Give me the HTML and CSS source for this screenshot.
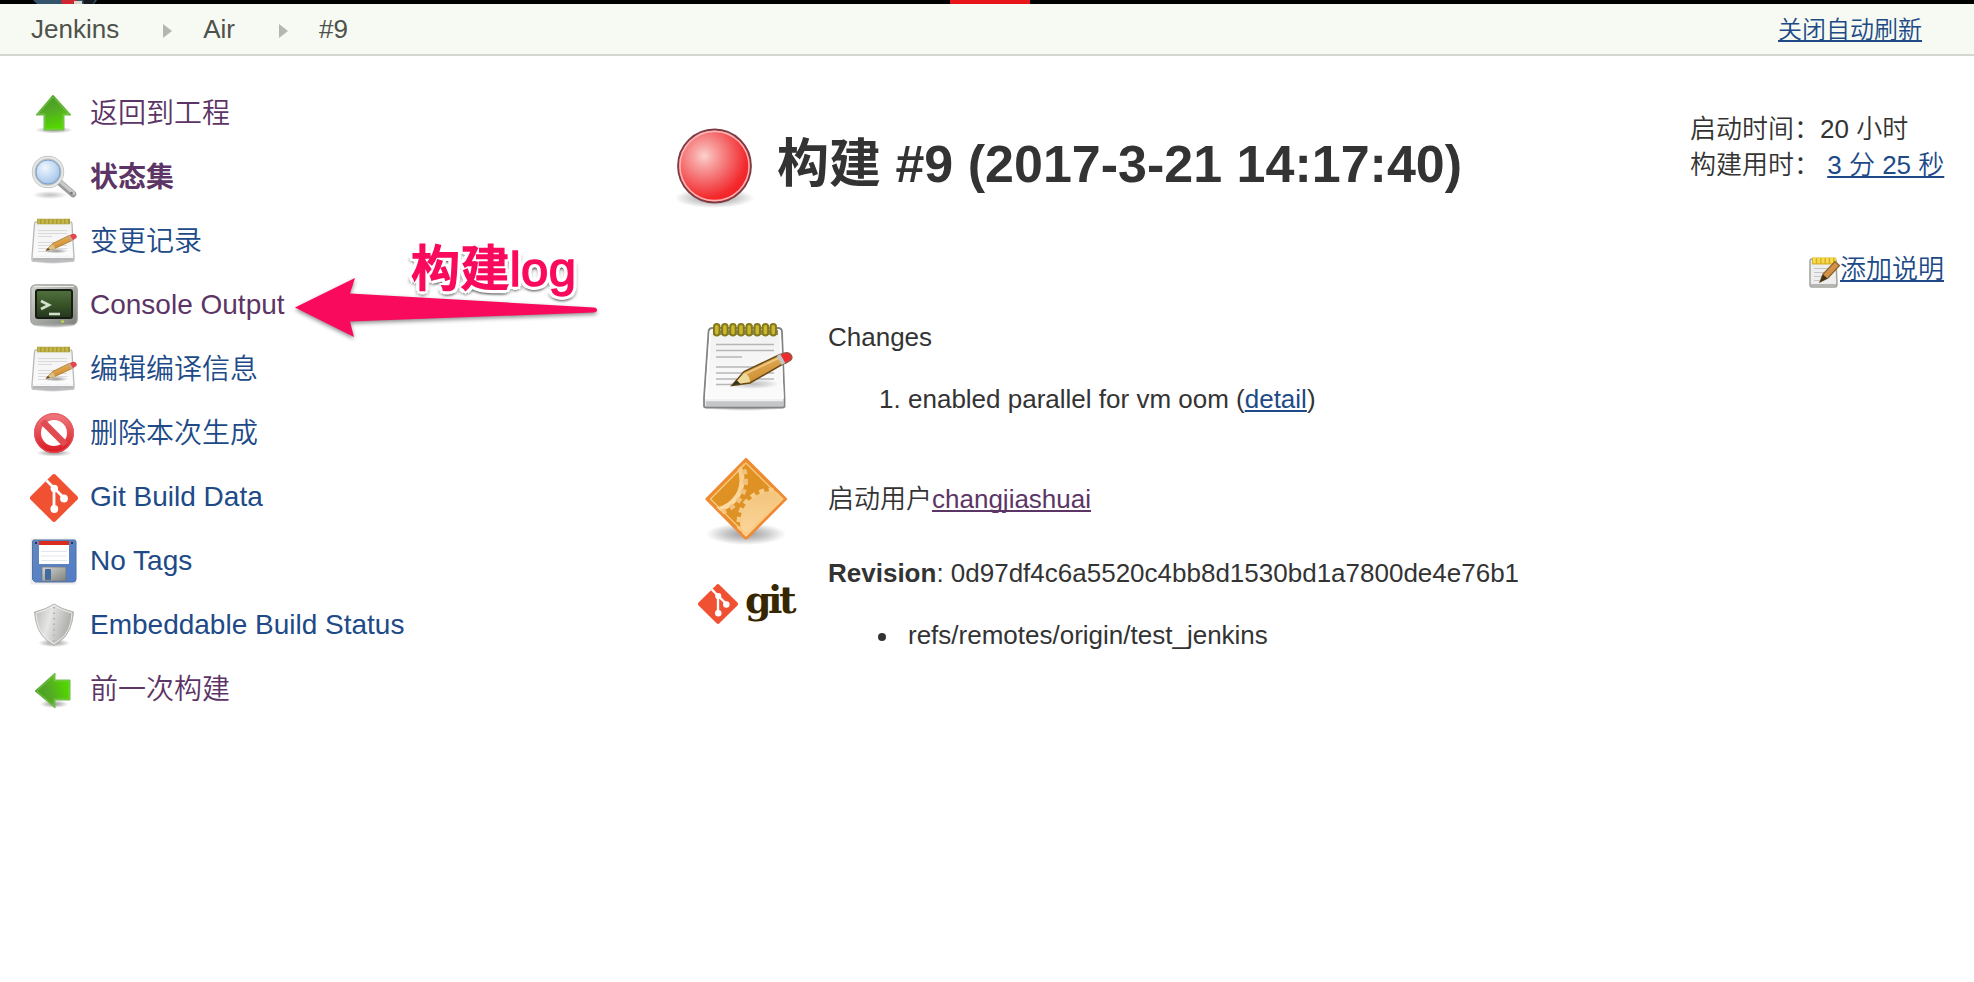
FILE: index.html
```html
<!DOCTYPE html>
<html lang="zh-CN">
<head>
    <meta charset="UTF-8">
    <title>Air #9 [Jenkins]</title>
    <link rel="stylesheet" href="styles.css">
</head>
<body>
    <svg class="defs" width="0" height="0">
        <defs>
            <linearGradient id="green" x1="0" y1="0" x2="0.3" y2="1">
                <stop offset="0" stop-color="#3f9a1c"/>
                <stop offset="0.5" stop-color="#54a826"/>
                <stop offset="1" stop-color="#52d600"/>
            </linearGradient>
            <linearGradient id="paper" x1="0" y1="0" x2="0" y2="1">
                <stop offset="0" stop-color="#f1f1f1"/>
                <stop offset="0.85" stop-color="#fbfbfb"/>
                <stop offset="1" stop-color="#dcdcdc"/>
            </linearGradient>
            <linearGradient id="wood" x1="0" y1="0" x2="0.5" y2="1">
                <stop offset="0" stop-color="#efc377"/>
                <stop offset="1" stop-color="#c98524"/>
            </linearGradient>
            <linearGradient id="metal" x1="0" y1="0" x2="1" y2="1">
                <stop offset="0" stop-color="#d4d6d2"/>
                <stop offset="1" stop-color="#7f817d"/>
            </linearGradient>
            <linearGradient id="screen" x1="0" y1="0" x2="0" y2="1">
                <stop offset="0" stop-color="#51703f"/>
                <stop offset="0.5" stop-color="#395528"/>
                <stop offset="1" stop-color="#23361e"/>
            </linearGradient>
            <linearGradient id="stop" x1="0" y1="0" x2="0" y2="1">
                <stop offset="0" stop-color="#ee7378"/>
                <stop offset="1" stop-color="#dc2029"/>
            </linearGradient>
            <linearGradient id="disk" x1="0" y1="0" x2="1" y2="1">
                <stop offset="0" stop-color="#6288bd"/>
                <stop offset="1" stop-color="#527dc8"/>
            </linearGradient>
            <linearGradient id="shield" x1="0" y1="0" x2="1" y2="0.3">
                <stop offset="0" stop-color="#b5b7b3"/>
                <stop offset="0.45" stop-color="#e6e7e4"/>
                <stop offset="0.6" stop-color="#d4d5d2"/>
                <stop offset="1" stop-color="#a8aaa6"/>
            </linearGradient>
            <linearGradient id="amber" x1="0" y1="0" x2="0.3" y2="1">
                <stop offset="0" stop-color="#e1921f"/>
                <stop offset="1" stop-color="#dd9128"/>
            </linearGradient>
            <linearGradient id="gear" x1="0" y1="0" x2="0" y2="1">
                <stop offset="0" stop-color="#f3c57c"/>
                <stop offset="1" stop-color="#ffdda8"/>
            </linearGradient>
            <radialGradient id="lens" cx="0.4" cy="0.35" r="0.7">
                <stop offset="0" stop-color="#f0f6fd"/>
                <stop offset="1" stop-color="#98bde6"/>
            </radialGradient>
            <radialGradient id="red" cx="0.36" cy="0.36" r="0.68">
                <stop offset="0" stop-color="#fbd2ce"/>
                <stop offset="0.2" stop-color="#f8a5a3"/>
                <stop offset="0.6" stop-color="#f4585b"/>
                <stop offset="0.85" stop-color="#f32a2e"/>
                <stop offset="1" stop-color="#f42125"/>
            </radialGradient>
            <radialGradient id="shade">
                <stop offset="0" stop-color="#000" stop-opacity="0.4"/>
                <stop offset="0.55" stop-color="#000" stop-opacity="0.2"/>
                <stop offset="1" stop-color="#000" stop-opacity="0"/>
            </radialGradient>
            <clipPath id="diamond"><path d="M48 8L86 46 48 84 10 46z"/></clipPath>
            <symbol id="notepad" viewBox="0 0 48 48">
                <ellipse cx="23" cy="43" rx="22" ry="3" fill="url(#shade)"/>
                <path d="M6 4h34q2 0 2 2l2 33v3q0 1-1 1H3q-1 0-1-1V39L4.500 6q0-2 1.500-2z" fill="url(#paper)" stroke="#b8b8b8" stroke-width="1.300"/>
                <path d="M3 41h40" stroke="#b4b6b9" stroke-width="2.500"/>
                <path d="M3 39.500h40" stroke="#fff" stroke-width="0.800"/>
                <path d="M8 12.500h29M8 15.500h29M8 18.500h14M8 24.500h29M8 27.500h29M8 30.500h29M8 33.500h12" stroke="#d2d2d2" stroke-width="0.800"/>
                <path d="M7 3.500h33" stroke="#a99c3e" stroke-width="5.500"/>
                <path d="M7.500 3.500h32" stroke="#c6b646" stroke-width="4.500" stroke-dasharray="2.500 1.500"/>
                <ellipse cx="26" cy="33" rx="12" ry="2.500" fill="url(#shade)"/>
                <path d="M16 32.500L22.500 25.500 39 17.500l3 5-18 8.500z" fill="url(#wood)" stroke="#ad7731" stroke-width="0.800"/>
                <path d="M16 32.500L22 26.500q3 1 3 4.500z" fill="#dcc28a"/>
                <path d="M16 32.500l2-2.500 2 1.500z" fill="#464020"/>
                <path d="M39 17.500l3-1.500q3.500-1 4.500 1.500 1 2-1.500 3.500l-3 1.500z" fill="#e2474d"/>
                <path d="M39 17.500l3 5" stroke="#c7a9a0" stroke-width="1.800"/>
            </symbol>
            <symbol id="git" viewBox="0 0 48 48">
                <path d="M22.300.8q1.700-1.600 3.400 0L47.300 22.300q1.500 1.700 0 3.400L25.700 47.200q-1.700 1.600-3.400 0L.7 25.700q-1.500-1.700 0-3.400z" fill="#f05133"/>
                <path d="M16.500 6.500L24 14v20.500M25 15l9.500 9.500" fill="none" stroke="#fff" stroke-width="2.800"/>
                <circle cx="24.300" cy="14.500" r="3.700" fill="#fff"/>
                <circle cx="34" cy="24.500" r="3.900" fill="#fff"/>
                <circle cx="24.300" cy="35" r="3.900" fill="#fff"/>
            </symbol>
            <symbol id="arrow" viewBox="0 0 48 48">
                <path d="M23 5L41 25h-7v15H14V25H6z" fill="url(#green)" stroke="#71bb4c" stroke-linejoin="round"/>
                <path d="M23 7L38.500 24H33v15H15V24H8z" fill="none" stroke="#8ccf66" stroke-opacity="0.6"/>
            </symbol>
        </defs>
    </svg>

    <header class="header">
        <svg class="logo" viewBox="0 0 64 4">
            <path d="M0 0h64l-3 4H4z" fill="#34536d"/>
            <path d="M28 0h16l-4 4H29z" fill="#cf2630"/>
            <path d="M41 1h8v3h-8z" fill="#ddd3cb"/>
            <path d="M50 0h12l-2 4h-9z" fill="#161a20"/>
        </svg>
        <div class="search"></div>
    </header>

    <nav class="breadcrumbs">
        <ul>
            <li>Jenkins</li>
            <li>Air</li>
            <li>#9</li>
        </ul>
        <a href="#" class="refresh">关闭自动刷新</a>
    </nav>

    <div class="page">
        <aside class="tasks">
            <a href="#" class="task visited zh">
                <svg class="icon" viewBox="0 0 48 48">
                    <ellipse cx="24" cy="40" rx="19" ry="3.500" fill="url(#shade)"/>
                    <use href="#arrow"/>
                </svg>
                <span>返回到工程</span>
            </a>
            <a href="#" class="task visited current zh">
                <svg class="icon" viewBox="0 0 48 48">
                    <ellipse cx="20" cy="41" rx="18" ry="4" fill="url(#shade)" opacity="0.6"/>
                    <path d="M28 27l15 13" stroke="#9a9a9a" stroke-width="6.500" stroke-linecap="round"/>
                    <path d="M28.500 26l15 13" stroke="#c9c9c9" stroke-width="3.500" stroke-linecap="round"/>
                    <circle cx="41.500" cy="39" r="1.300" fill="#777"/>
                    <circle cx="18" cy="18" r="14.300" fill="url(#lens)" stroke="#b9bcb9" stroke-width="3.800"/>
                    <circle cx="18" cy="18" r="14.500" fill="none" stroke="#e8eae8" stroke-width="2"/>
                    <circle cx="18" cy="18" r="12" fill="none" stroke="#799fcb" stroke-width="1"/>
                </svg>
                <span>状态集</span>
            </a>
            <a href="#" class="task zh">
                <svg class="icon"><use href="#notepad"/></svg>
                <span>变更记录</span>
            </a>
            <a href="#" class="task visited">
                <svg class="icon" viewBox="0 0 48 48">
                    <ellipse cx="24" cy="43" rx="22" ry="3" fill="url(#shade)"/>
                    <rect x="0.800" y="2.800" width="46.400" height="40" rx="5" fill="url(#metal)" stroke="#a3a5a1" stroke-width="1.300"/>
                    <path d="M4 4.500h40" stroke="#ececea" stroke-width="1"/>
                    <rect x="6" y="8" width="36" height="28" rx="2" fill="url(#screen)" stroke="#171c12" stroke-width="2"/>
                    <path d="M11 19l8 4-8 4" fill="none" stroke="#d5dfce" stroke-width="2.600"/>
                    <path d="M19 32h11" stroke="#d5dfce" stroke-width="2.600"/>
                    <circle cx="32.500" cy="39.500" r="1.600" fill="#b8d34c"/>
                </svg>
                <span>Console Output</span>
            </a>
            <a href="#" class="task zh">
                <svg class="icon"><use href="#notepad"/></svg>
                <span>编辑编译信息</span>
            </a>
            <a href="#" class="task zh">
                <svg class="icon" viewBox="0 0 48 48">
                    <ellipse cx="24" cy="43" rx="18" ry="3.500" fill="url(#shade)"/>
                    <circle cx="24" cy="23" r="16.500" fill="#fff" stroke="url(#stop)" stroke-width="7"/>
                    <path d="M12.500 11.500l23 23" stroke="#e04a51" stroke-width="6.500"/>
                    <circle cx="24" cy="23" r="19.400" fill="none" stroke="#df5a60" stroke-width="0.900"/>
                </svg>
                <span>删除本次生成</span>
            </a>
            <a href="#" class="task">
                <svg class="icon"><use href="#git"/></svg>
                <span>Git Build Data</span>
            </a>
            <a href="#" class="task">
                <svg class="icon" viewBox="0 0 48 48">
                    <rect x="0.500" y="0.500" width="46" height="46" fill="#ececec"/>
                    <path d="M4 2h40q2 0 2 2v37q0 3-3 3H6q-1 0-2-1l-1.500-1.500V4Q2.500 2 4 2z" fill="url(#disk)" stroke="#5273a6"/>
                    <path d="M9 4h30v22H9z" fill="#fff"/>
                    <path d="M9 3h30v4H9z" fill="#da2c1e"/>
                    <path d="M11 13.500h26M11 18h26M11 22.500h26" stroke="#e4e6ec"/>
                    <path d="M5 4h2v2H5zM41 4h2v2h-2z" fill="#1f355d"/>
                    <path d="M12 29h23q1 0 1 1v13H12z" fill="url(#metal)" stroke="#6c747d" stroke-width="0.700"/>
                    <rect x="15" y="31" width="6" height="11" rx="1" fill="#44699e"/>
                </svg>
                <span>No Tags</span>
            </a>
            <a href="#" class="task">
                <svg class="icon" viewBox="0 0 48 48">
                    <ellipse cx="24" cy="41" rx="16" ry="4" fill="url(#shade)"/>
                    <path d="M24 2q7 5 19.500 8Q42 30 31 38.500q-4 3-7 5-3-2-7-5Q6 30 4.500 10 17 7 24 2z" fill="url(#shield)" stroke="#b2b4b0" stroke-width="1"/>
                    <path d="M24 3.500q7 5 18 7.500Q41 30 30 37.500L24 42l-6-4.500Q7 30 6 11 17 8.500 24 3.500z" fill="none" stroke="#ecedea" stroke-width="1"/>
                    <path d="M24 5v37" stroke="#b3b5b1" stroke-width="2" stroke-dasharray="1.500 4"/>
                </svg>
                <span>Embeddable Build Status</span>
            </a>
            <a href="#" class="task visited zh">
                <svg class="icon" viewBox="0 0 48 48">
                    <ellipse cx="24" cy="38" rx="14" ry="4" fill="url(#shade)"/>
                    <use href="#arrow" transform="rotate(-90 24 24)"/>
                </svg>
                <span>前一次构建</span>
            </a>
        </aside>

        <main class="main">
            <section class="build">
                <h1>
                    <svg class="big-icon" viewBox="0 0 96 96">
                        <ellipse cx="48.500" cy="80" rx="40" ry="10" fill="url(#shade)"/>
                        <circle cx="48.500" cy="48" r="36.500" fill="url(#red)" stroke="#7c3c46" stroke-width="1.800"/>
                        <circle cx="48.500" cy="48" r="34.600" fill="none" stroke="#fbb5b3" stroke-width="1.600"/>
                    </svg>
                    <span>构建 #9 (2017-3-21 14:17:40)</span>
                </h1>

                <div class="row changes">
                    <svg class="big-icon" viewBox="0 0 96 96">
                        <ellipse cx="47" cy="87" rx="44" ry="4" fill="url(#shade)"/>
                        <path d="M15 8h65q4 0 4 4l2.500 66v8q0 1.500-2 1.500H8q-2 0-2-1.500v-8l4.500-66q0-4 4.500-4z" fill="url(#paper)" stroke="#848484" stroke-width="1.800"/>
                        <path d="M12.500 12q0-2 3-2h64q2.500 0 2.500 2l3 66H8z" fill="none" stroke="#fff" stroke-width="1.500"/>
                        <path d="M8 83.500h77" stroke="#c5c6c9" stroke-width="5"/>
                        <path d="M8 80.500h77" stroke="#eef0f2" stroke-width="1.500"/>
                        <path d="M18 24.500h58M18 30.500h58M18 37h26M18 47h58M18 53h58M18 59h58M18 64.500h24" stroke="#b6b6b6" stroke-width="1.700"/>
                        <path d="M15 12.500h65" stroke="#8f8f7c" stroke-width="5"/>
                        <g fill="#cbb82e" stroke="#857a1b" stroke-width="2">
                            <rect x="16" y="4" width="5.500" height="11.500" rx="2.700"/>
                            <rect x="24.100" y="4" width="5.500" height="11.500" rx="2.700"/>
                            <rect x="32.200" y="4" width="5.500" height="11.500" rx="2.700"/>
                            <rect x="40.300" y="4" width="5.500" height="11.500" rx="2.700"/>
                            <rect x="48.400" y="4" width="5.500" height="11.500" rx="2.700"/>
                            <rect x="56.500" y="4" width="5.500" height="11.500" rx="2.700"/>
                            <rect x="64.600" y="4" width="5.500" height="11.500" rx="2.700"/>
                            <rect x="72.500" y="4" width="5.500" height="11.500" rx="2.700"/>
                        </g>
                        <ellipse cx="55" cy="64" rx="26" ry="5" fill="url(#shade)" opacity="0.6"/>
                        <path d="M34 65.500L46 51.500 82 34.500l4 9L52 63z" fill="url(#wood)" stroke="#684818" stroke-width="1.500"/>
                        <path d="M47 54l35-16.500" stroke="#f1cd8a" stroke-width="1.500"/>
                        <path d="M36 64.500L46 53q6 2 6 9z" fill="#edd99a"/>
                        <path d="M34 65.500l4.500-5.500 4 4z" fill="#37371c"/>
                        <path d="M82 34.500l4-1.500q5-1.500 7.500 2.500 1.500 3.500-2 5.500L87 43.500z" fill="#ee2c2f" stroke="#8d5a4b" stroke-width="1.300"/>
                        <path d="M80.500 35l5 9" stroke="#c5c5c5" stroke-width="4"/>
                    </svg>
                    <div class="text">
                        <p>Changes</p>
                        <ol>
                            <li>enabled parallel for vm oom (<a href="#">detail</a>)</li>
                        </ol>
                    </div>
                </div>

                <div class="row cause">
                    <svg class="big-icon" viewBox="0 0 96 96">
                        <ellipse cx="48" cy="81" rx="40" ry="11" fill="url(#shade)"/>
                        <path d="M48 5.500L88.500 46 50 85q-1.500 1.500-3 0L8.500 46z" fill="url(#amber)"/>
                        <g clip-path="url(#diamond)">
                            <circle cx="14" cy="27" r="30" fill="none" stroke="url(#gear)" stroke-width="5"/>
                            <circle cx="14" cy="27" r="33.500" fill="none" stroke="#f0c27c" stroke-width="5" stroke-dasharray="5 4.500"/>
                            <circle cx="74" cy="70" r="32" fill="url(#gear)"/>
                            <circle cx="74" cy="70" r="33" fill="none" stroke="#f6cc8a" stroke-width="5" stroke-dasharray="5 4.500"/>
                        </g>
                        <path d="M48 6L88 46 49.500 84.500q-1.500 1.500-3 0L8.500 46z" fill="none" stroke="#f08a35" stroke-width="2.400" stroke-linejoin="round"/>
                        <path d="M48 10L84 46 48 81.500 12.500 46z" fill="none" stroke="#ffc880" stroke-width="1.300"/>
                    </svg>
                    <div class="text">
                        <p>启动用户<a href="#" class="visited">changjiashuai</a></p>
                    </div>
                </div>

                <div class="row revision">
                    <div class="git-logo">
                        <svg viewBox="0 0 48 48"><use href="#git"/></svg>
                        <span>git</span>
                    </div>
                    <div class="text">
                        <p><b>Revision</b>: 0d97df4c6a5520c4bb8d1530bd1a7800de4e76b1</p>
                        <ul>
                            <li>refs/remotes/origin/test_jenkins</li>
                        </ul>
                    </div>
                </div>
            </section>

            <section class="info">
                <div>启动时间：20 小时</div>
                <div>构建用时： <a href="#">3 分 25 秒</a></div>
                <div class="description">
                    <svg viewBox="0 0 32 32">
                        <path d="M3 3h23q1 0 1 1l1 24q0 3-2 3H3q-2 0-2-2V5q0-2 2-2z" fill="#eeeeef" stroke="#a3a39c" stroke-width="1.500"/>
                        <path d="M2 29h25" stroke="#b5b5b5" stroke-width="2"/>
                        <path d="M5 12.500h16M5 16.500h14M5 20.500h9M5 24.500h7" stroke="#c6c6ca"/>
                        <path d="M3 5h24" stroke="#d9b02a" stroke-width="7"/>
                        <path d="M4 4.500h23" stroke="#f5dc4c" stroke-width="5.500" stroke-dasharray="2.800 1.500"/>
                        <path d="M11 26l3-8L26 5.500l4.500 4L19 22z" fill="#d3924a" stroke="#8a6029" stroke-width="1.200"/>
                        <path d="M11 26l3-7.500 4.500 4z" fill="#3b3320"/>
                    </svg>
                    <a href="#">添加说明</a>
                </div>
            </section>
        </main>
    </div>

    <div class="note">
        <svg viewBox="0 0 330 120">
            <path d="M15 77.500L75 48l-5 15.500L313.500 77.500q3.500.3 3.500 2.500t-3.500 2.500L70 91.500l4 15.500z" fill="#f90a5c"/>
        </svg>
        <span>构建log</span>
    </div>
</body>
</html>
```
FILE: styles.css
```css
* {
    margin: 0;
    padding: 0;
    box-sizing: border-box;
}
body {
    font-family: "Liberation Sans", "Noto Sans CJK SC", sans-serif;
    font-size: 26px;
    font-weight: 350;
    line-height: 36px;
    color: #333;
    background: #fff;
}
a {
    color: #204a87;
    text-decoration-thickness: 2px;
    text-decoration-skip-ink: none;
    text-underline-offset: 2px;
}
a.visited {
    color: #5c3566;
}
b {
    font-weight: 700;
}
svg {
    display: block;
    flex: none;
    overflow: visible;
}
.defs {
    position: absolute;
}
.header {
    display: flex;
    height: 4px;
    padding-left: 33px;
    background: #000;
}
.logo {
    width: 64px;
    height: 4px;
    overflow: hidden;
}
.search {
    width: 80px;
    margin-left: 853px;
    background: #e8161b;
}
.breadcrumbs {
    display: flex;
    justify-content: space-between;
    height: 52px;
    padding: 0 52px 0 31px;
    line-height: 50px;
    background: #f6faf2;
    border-bottom: 2px solid #d3d7cf;
}
.breadcrumbs ul {
    display: flex;
    list-style: none;
}
.breadcrumbs li {
    display: flex;
    align-items: center;
    color: #4f514c;
}
.breadcrumbs li + li::before {
    content: "";
    margin: 3px 31px 0 44px;
    border-left: 9px solid #b3b7b0;
    border-top: 7px solid transparent;
    border-bottom: 7px solid transparent;
}
.refresh {
    padding-top: 1px;
    font-size: 24px;
}
.page {
    display: flex;
}
.tasks {
    width: 666px;
    padding: 26px 0 0 30px;
}
.task {
    display: flex;
    align-items: center;
    gap: 12px;
    height: 64px;
    font-size: 28px;
    text-decoration: none;
}
.task span {
    padding-bottom: 3px;
}
.task.zh span {
    padding-bottom: 1px;
}
.current {
    font-weight: bold;
}
.icon {
    width: 48px;
    height: 48px;
}
.main {
    display: flex;
    flex: 1;
    justify-content: space-between;
    padding-right: 30px;
}
.build {
    padding-top: 60px;
}
h1 {
    display: flex;
    gap: 15px;
    margin-bottom: 105px;
    font-size: 52px;
    line-height: 96px;
}
.big-icon {
    width: 96px;
    height: 96px;
}
h1 .big-icon {
    margin-top: 2px;
}
.row {
    display: flex;
    align-items: center;
    gap: 34px;
    margin: 0 0 8px 32px;
}
.changes {
    align-items: flex-start;
    height: 124px;
}
.changes .big-icon {
    margin-top: 1px;
}
.cause {
    height: 96px;
}
.cause .big-icon {
    margin-top: 3px;
}
.text ol,
.text ul {
    margin-top: 26px;
    padding-left: 80px;
}
.text ul {
    list-style: none;
}
.text ul li {
    display: flex;
    align-items: center;
}
.text ul li::before {
    content: "";
    width: 8px;
    height: 8px;
    margin: 3px 22px 0 -30px;
    border-radius: 50%;
    background: #333;
}
.git-logo {
    display: flex;
    align-items: center;
    gap: 7px;
    width: 96px;
}
.git-logo svg {
    width: 40px;
    height: 40px;
}
.git-logo span {
    padding-bottom: 8px;
    font: bold 38px/40px "DejaVu Serif", serif;
    letter-spacing: -3.5px;
    color: #362701;
}
.info {
    width: 254px;
    padding-top: 55px;
    white-space: nowrap;
}
.description {
    display: flex;
    justify-content: flex-end;
    margin-top: 68px;
}
.description svg {
    width: 32px;
    height: 32px;
    margin: 5px -1px 0 0;
}
.note {
    position: absolute;
    left: 280px;
    top: 230px;
    width: 330px;
    height: 120px;
}
.note svg {
    filter: drop-shadow(0 2px 2px rgba(0, 0, 0, 0.45));
}
.note span {
    position: absolute;
    left: 131px;
    top: 9px;
    font-size: 49px;
    font-weight: 500;
    line-height: 60px;
    letter-spacing: 0.4px;
    color: #f90a5c;
    -webkit-text-stroke: 1.5px #f90a5c;
    text-shadow: 4px 0 #fff, -4px 0 #fff, 0 4px #fff, 0 -4px #fff,
        3px 3px #fff, -3px 3px #fff, 3px -3px #fff, -3px -3px #fff,
        0 5px 3px rgba(0, 0, 0, 0.6), 4px 4px 3px rgba(0, 0, 0, 0.3), -4px 4px 3px rgba(0, 0, 0, 0.3);
}
```
